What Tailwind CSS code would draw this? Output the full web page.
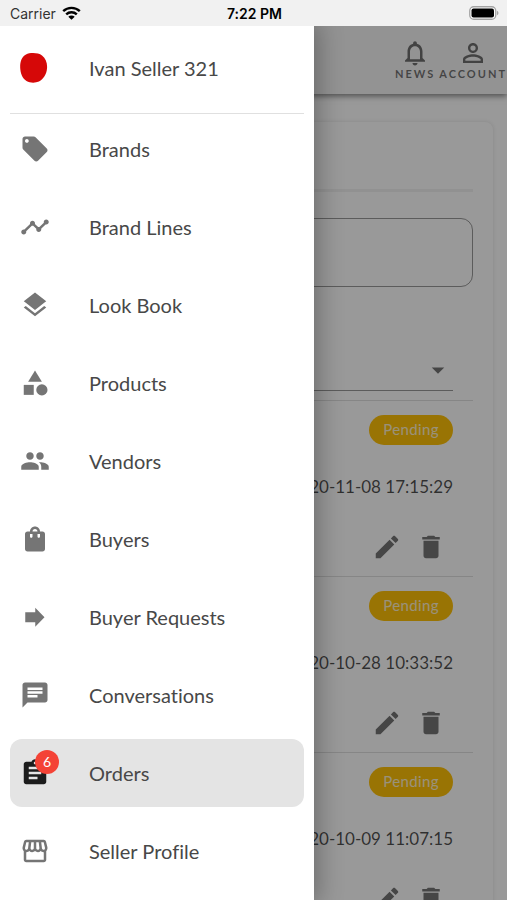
<!DOCTYPE html>
<html lang="en">
<head>
<meta charset="utf-8">
<meta name="viewport" content="width=device-width, initial-scale=1">
<title>Orders</title>
<script src="https://cdn.jsdelivr.net/npm/@tailwindcss/browser@4"></script>
</head>
<body class="flex h-screen flex-col overflow-hidden bg-white font-[Lato,sans-serif] text-black/70 [font-variant-ligatures:none]">
<svg class="hidden" aria-hidden="true">
  <symbol id="pencil" viewBox="0 0 24 24"><path d="M3 17.250V21h3.750L17.810 9.940l-3.750-3.750L3 17.250zM20.710 7.040c.39-.39.39-1.020 0-1.410l-2.340-2.340c-.39-.39-1.020-.39-1.410 0l-1.830 1.830 3.750 3.750 1.830-1.830z"/></symbol>
  <symbol id="trash" viewBox="0 0 24 24"><path d="M6 19c0 1.100.9 2 2 2h8c1.100 0 2-.9 2-2V7H6v12zM19 4h-3.500l-1-1h-5l-1 1H5v2h14V4z"/></symbol>
</svg>

<div class="grid h-[26px] shrink-0 grid-cols-3 items-center bg-[#f1f1f1] pr-2 pl-[10px] font-[Inter,sans-serif] text-[14px] text-black">
  <div class="flex items-center gap-[6px]">
    <span class="text-[#333]">Carrier</span>
    <svg class="h-[14px] w-[19px]" viewBox="0 0 19 14" aria-hidden="true"><g fill="none" stroke="#000" stroke-width="2.400"><path d="M1.200 5.200a12 12 0 0 1 16.600 0"/><path d="M4.200 8.400a7.600 7.600 0 0 1 10.600 0"/></g><path d="M9.500 13.800 6.300 10.700a4.600 4.600 0 0 1 6.400 0z"/></svg>
  </div>
  <span class="text-center font-semibold">7:22 PM</span>
  <svg class="h-[14px] w-[30px] justify-self-end" viewBox="0 0 30 14" aria-hidden="true"><rect x=".75" y=".75" width="26" height="12.500" rx="4" fill="#fff" stroke="#a3a3a3" stroke-width="1.300"/><rect x="2.500" y="2.500" width="22.500" height="9" rx="2"/><path d="M28 4.800c2 .8 2 3.600 0 4.400z" fill="#a3a3a3"/></svg>
</div>

<div class="relative flex min-h-0 flex-1 flex-col overflow-hidden">
  <header class="z-0 flex h-[68px] shrink-0 items-center justify-end gap-1 bg-[#f5f5f5] pb-[2px] shadow-[0_2px_6px_rgba(0,0,0,0.5)]">
    <a href="#news" class="flex flex-col items-center text-[11px] leading-[12px] font-bold tracking-[2px] text-black/55">
      <svg class="size-[30px] fill-current" viewBox="0 0 24 24" aria-hidden="true"><path d="M12 22c1.100 0 2-.9 2-2h-4c0 1.100.9 2 2 2zm6-6v-5c0-3.070-1.630-5.640-4.500-6.320V4c0-.83-.67-1.500-1.500-1.500s-1.500.67-1.500 1.500v.68C7.640 5.360 6 7.920 6 11v5l-2 2v1h16v-1l-2-2zm-2 1H8v-6c0-2.480 1.510-4.500 4-4.500s4 2.020 4 4.500v6z"/></svg>
      NEWS
    </a>
    <a href="#account" class="flex flex-col items-center text-[11px] leading-[12px] font-bold tracking-[2px] text-black/55">
      <svg class="size-[30px] fill-current" viewBox="0 0 24 24" aria-hidden="true"><path d="M12 5.900a2.100 2.100 0 1 1 0 4.200 2.100 2.100 0 0 1 0-4.200m0 9c2.970 0 6.100 1.460 6.100 2.100v1.100H5.900V17c0-.64 3.130-2.100 6.100-2.100M12 4C9.790 4 8 5.790 8 8s1.790 4 4 4 4-1.790 4-4-1.790-4-4-4zm0 9c-2.670 0-8 1.340-8 4v3h16v-3c0-2.660-5.330-4-8-4z"/></svg>
      ACCOUNT
    </a>
  </header>

  <main class="mx-[14px] mt-7 flex flex-col rounded-lg px-5 shadow-[0_0_4px_rgba(0,0,0,0.12)]">
    <div class="h-[70px] shrink-0 border-b-3 border-black/5"></div>
    <input type="text" aria-label="Search orders" class="mt-[26px] h-[69px] rounded-xl border border-black/40 px-4">
    <div class="relative mx-5 mt-[62px] flex">
      <select aria-label="Status" class="h-[42px] w-full appearance-none border-b border-black/40"><option></option></select>
      <svg class="pointer-events-none absolute right-0 top-[6px] size-[30px] fill-black/55" viewBox="0 0 24 24" aria-hidden="true"><path d="m7 10 5 5 5-5z"/></svg>
    </div>
    <ul class="mt-[9px]">
      <li class="flex h-[176px] flex-col items-end border-t border-black/12 pt-[14px] pr-5">
        <span class="h-[30px] rounded-full bg-[#ffc107] px-[14px] text-[15px] leading-[28px] tracking-wide text-white/80">Pending</span>
        <time class="mt-[30px] text-[17px] leading-6">2020-11-08 17:15:29</time>
        <div class="mt-[26px] flex text-black/54">
          <button aria-label="Edit" class="flex h-11 w-11 items-center justify-center"><svg class="size-[30px] fill-current"><use href="#pencil"/></svg></button>
          <button aria-label="Delete" class="flex h-11 w-11 items-center justify-center"><svg class="size-[30px] fill-current"><use href="#trash"/></svg></button>
        </div>
      </li>
      <li class="flex h-[176px] flex-col items-end border-t border-black/12 pt-[14px] pr-5">
        <span class="h-[30px] rounded-full bg-[#ffc107] px-[14px] text-[15px] leading-[28px] tracking-wide text-white/80">Pending</span>
        <time class="mt-[30px] text-[17px] leading-6">2020-10-28 10:33:52</time>
        <div class="mt-[26px] flex text-black/54">
          <button aria-label="Edit" class="flex h-11 w-11 items-center justify-center"><svg class="size-[30px] fill-current"><use href="#pencil"/></svg></button>
          <button aria-label="Delete" class="flex h-11 w-11 items-center justify-center"><svg class="size-[30px] fill-current"><use href="#trash"/></svg></button>
        </div>
      </li>
      <li class="flex h-[176px] flex-col items-end border-t border-black/12 pt-[14px] pr-5">
        <span class="h-[30px] rounded-full bg-[#ffc107] px-[14px] text-[15px] leading-[28px] tracking-wide text-white/80">Pending</span>
        <time class="mt-[30px] text-[17px] leading-6">2020-10-09 11:07:15</time>
        <div class="mt-[26px] flex text-black/54">
          <button aria-label="Edit" class="flex h-11 w-11 items-center justify-center"><svg class="size-[30px] fill-current"><use href="#pencil"/></svg></button>
          <button aria-label="Delete" class="flex h-11 w-11 items-center justify-center"><svg class="size-[30px] fill-current"><use href="#trash"/></svg></button>
        </div>
      </li>
    </ul>
  </main>

  <div class="absolute inset-0 bg-black/40"></div>

  <nav aria-label="Main menu" class="absolute inset-y-0 left-0 w-[314px] bg-white px-[10px] text-[20px] text-[#484848] shadow-[0_0_24px_4px_rgba(0,0,0,0.3)]">
    <a href="#me" class="flex h-[88px] items-center gap-10 border-b border-black/12 pb-[3px] pl-[9px]">
      <svg class="size-[30px]" viewBox="0 0 30 30" aria-hidden="true"><path d="M7 1.500C11-.5 19-.5 23 2.500c4 3 5.500 8 5 13-.5 6-3.500 10.500-8 13-4 1.700-9 1.500-12.500-.5C3 25 1.500 20 1.200 15 1 10 2 4 7 1.500z" fill="#d60808"/></svg>
      Ivan Seller 321
    </a>
    <div class="flex flex-col gap-[10px] pt-px">
      <a href="#brands" class="flex h-[68px] items-center gap-[39px] rounded-xl pb-px pl-[10px]">
        <svg class="size-[30px] fill-[#757575]" viewBox="0 0 24 24" aria-hidden="true"><path d="m21.410 11.580-9-9C12.050 2.220 11.550 2 11 2H4c-1.100 0-2 .9-2 2v7c0 .55.22 1.050.59 1.420l9 9c.36.36.86.58 1.410.58s1.050-.22 1.410-.59l7-7c.37-.36.59-.86.59-1.410s-.23-1.060-.59-1.420zM5.500 7C4.670 7 4 6.330 4 5.500S4.670 4 5.500 4 7 4.670 7 5.500 6.330 7 5.500 7z"/></svg>
        Brands
      </a>
      <a href="#lines" class="flex h-[68px] items-center gap-[39px] rounded-xl pb-px pl-[10px]">
        <svg class="size-[30px] fill-[#757575]" viewBox="0 0 24 24" aria-hidden="true"><path d="M23 8c0 1.100-.9 2-2 2-.18 0-.35-.02-.51-.07l-3.560 3.550c.05.16.07.34.07.52 0 1.100-.9 2-2 2s-2-.9-2-2c0-.18.02-.36.07-.52l-2.550-2.550c-.16.05-.34.07-.52.07s-.36-.02-.52-.07l-4.550 4.560c.05.16.07.33.07.51 0 1.100-.9 2-2 2s-2-.9-2-2 .9-2 2-2c.18 0 .35.02.51.07l4.560-4.550C8.020 9.360 8 9.180 8 9c0-1.100.9-2 2-2s2 .9 2 2c0 .18-.02.36-.07.52l2.550 2.550c.16-.05.34-.07.52-.07s.36.02.52.07l3.550-3.560C19.020 8.350 19 8.180 19 8c0-1.100.9-2 2-2s2 .9 2 2z"/></svg>
        Brand Lines
      </a>
      <a href="#lookbook" class="flex h-[68px] items-center gap-[39px] rounded-xl pb-px pl-[10px]">
        <svg class="size-[30px] fill-[#757575]" viewBox="0 0 24 24" aria-hidden="true"><path d="m11.990 18.540-7.370-5.730L3 14.070l9 7 9-7-1.630-1.270-7.380 5.740zM12 16l7.360-5.730L21 9l-9-7-9 7 1.630 1.270L12 16z"/></svg>
        Look Book
      </a>
      <a href="#products" class="flex h-[68px] items-center gap-[39px] rounded-xl pb-px pl-[10px]">
        <svg class="size-[30px] fill-[#757575]" viewBox="0 0 24 24" aria-hidden="true"><path d="m12 2-5.500 9h11z"/><circle cx="17.500" cy="17.500" r="4.500"/><path d="M3 13.500h8v8H3z"/></svg>
        Products
      </a>
      <a href="#vendors" class="flex h-[68px] items-center gap-[39px] rounded-xl pb-px pl-[10px]">
        <svg class="size-[30px] fill-[#757575]" viewBox="0 0 24 24" aria-hidden="true"><path d="M16 11c1.660 0 2.990-1.340 2.990-3S17.660 5 16 5s-3 1.340-3 3 1.340 3 3 3zm-8 0c1.660 0 2.990-1.340 2.990-3S9.660 5 8 5 5 6.340 5 8s1.340 3 3 3zm0 2c-2.330 0-7 1.170-7 3.500V19h14v-2.500c0-2.330-4.670-3.500-7-3.500zm8 0c-.29 0-.62.02-.97.05 1.160.84 1.970 1.970 1.970 3.450V19h6v-2.500c0-2.330-4.670-3.500-7-3.500z"/></svg>
        Vendors
      </a>
      <a href="#buyers" class="flex h-[68px] items-center gap-[39px] rounded-xl pb-px pl-[10px]">
        <svg class="size-[30px] fill-[#757575]" viewBox="0 0 24 24" aria-hidden="true"><path d="M18 6h-2c0-2.210-1.790-4-4-4S8 3.790 8 6H6c-1.100 0-2 .9-2 2v12c0 1.100.9 2 2 2h12c1.100 0 2-.9 2-2V8c0-1.100-.9-2-2-2zm-8 4c0 .55-.45 1-1 1s-1-.45-1-1V8h2v2zm2-6c1.100 0 2 .9 2 2h-4c0-1.100.9-2 2-2zm4 6c0 .55-.45 1-1 1s-1-.45-1-1V8h2v2z"/></svg>
        Buyers
      </a>
      <a href="#requests" class="flex h-[68px] items-center gap-[39px] rounded-xl pb-px pl-[10px]">
        <svg class="size-[30px] fill-[#757575]" viewBox="0 0 24 24" aria-hidden="true"><path d="M4.200 8.200h8V4.600l7.400 7.600-7.400 7.600v-3.600h-8z"/></svg>
        Buyer Requests
      </a>
      <a href="#conversations" class="flex h-[68px] items-center gap-[39px] rounded-xl pb-px pl-[10px]">
        <svg class="size-[30px] fill-[#757575]" viewBox="0 0 24 24" aria-hidden="true"><path d="M20 2H4c-1.100 0-1.990.9-1.990 2L2 22l4-4h14c1.100 0 2-.9 2-2V4c0-1.100-.9-2-2-2zM6 9h12v2H6V9zm8 5H6v-2h8v2zm4-6H6V6h12v2z"/></svg>
        Conversations
      </a>
      <a href="#orders" aria-current="page" class="flex h-[68px] items-center gap-[39px] rounded-xl bg-[#e4e4e4] pb-px pl-[10px]">
        <span class="relative">
          <svg class="size-[30px] fill-[#1c1c1c]" viewBox="0 0 24 24" aria-hidden="true"><path d="M19 3h-4.180C14.400 1.840 13.300 1 12 1c-1.300 0-2.400.84-2.820 2H5c-1.100 0-2 .9-2 2v14c0 1.100.9 2 2 2h14c1.100 0 2-.9 2-2V5c0-1.100-.9-2-2-2zm-7 0c.55 0 1 .45 1 1s-.45 1-1 1-1-.45-1-1 .45-1 1-1zm2 14H7v-2h7v2zm3-4H7v-2h10v2zm0-4H7V7h10v2z"/></svg>
          <span class="absolute -top-2 -right-[9px] flex size-6 items-center justify-center rounded-full bg-[#f44336] text-[14px] text-white">6</span>
        </span>
        Orders
      </a>
      <a href="#profile" class="flex h-[68px] items-center gap-[39px] rounded-xl pb-px pl-[10px]">
        <svg class="size-[30px] fill-[#757575]" viewBox="0 0 24 24" aria-hidden="true"><path d="m21.900 8.890-1.050-4.370c-.22-.9-1-1.520-1.910-1.520H5.050c-.9 0-1.690.63-1.900 1.520L2.100 8.890c-.24 1.020-.02 2.060.62 2.880.08.11.19.19.28.29V19c0 1.100.9 2 2 2h14c1.100 0 2-.9 2-2v-6.940c.09-.09.2-.18.28-.28.64-.82.87-1.870.62-2.890zm-2.990-3.900 1.050 4.370c.1.420.01.84-.25 1.170-.14.18-.44.47-.94.47-.61 0-1.140-.49-1.210-1.140L16.980 5l1.930-.01zM13 5h1.960l.54 4.520c.05.39-.07.78-.33 1.070-.22.26-.54.41-.95.41-.67 0-1.220-.59-1.220-1.310V5zM8.490 9.520 9.040 5H11v4.690c0 .72-.55 1.310-1.290 1.310-.34 0-.65-.15-.89-.41-.25-.29-.37-.68-.33-1.070zm-4.450-.16L5.050 5h1.970l-.58 4.860c-.08.65-.6 1.140-1.210 1.140-.49 0-.8-.29-.93-.47-.27-.32-.36-.75-.26-1.170zM5 19v-6.030c.08.010.15.030.23.030.87 0 1.660-.36 2.240-.95.6.6 1.400.95 2.310.95.87 0 1.650-.36 2.230-.93.59.57 1.390.93 2.290.93.84 0 1.640-.35 2.240-.95.58.59 1.370.95 2.240.95.08 0 .15-.02.23-.03V19H5z"/></svg>
        Seller Profile
      </a>
    </div>
  </nav>
</div>
</body>
</html>
